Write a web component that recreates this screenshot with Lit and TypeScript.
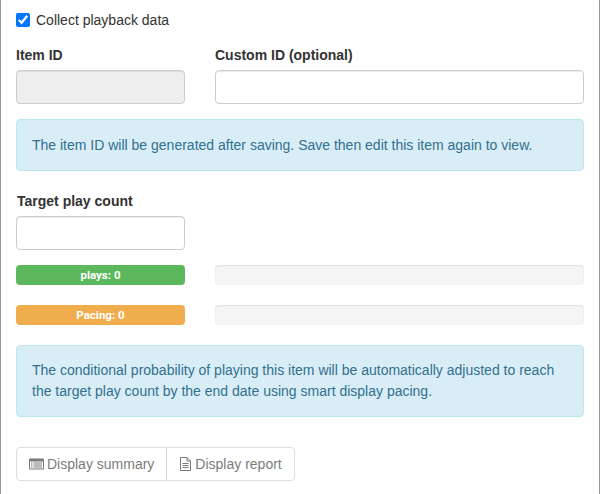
import { LitElement, html, css } from "lit";
import { customElement } from "lit/decorators.js";

@customElement("app-root")
export class AppRoot extends LitElement {
  static styles = css`
    :host {
      display: block;
      width: 600px;
      height: 494px;
      box-sizing: border-box;
      border-left: 1px solid #999;
      border-right: 1px solid #999;
      padding: 0 15px;
      background: #fff;
      color: #333;
      font-family: "Liberation Sans", Arial, sans-serif;
      font-size: 14px;
      line-height: 20px;
      overflow: hidden;
    }
    .check {
      display: flex;
      align-items: center;
      height: 20px;
      margin-top: 10px;
      gap: 6px;
    }
    .check input {
      width: 14px;
      height: 14px;
      margin: 0;
      accent-color: #0075ff;
    }
    .cols {
      display: grid;
      grid-template-columns: 169px 369px;
      column-gap: 30px;
    }
    .first {
      margin-top: 15px;
    }
    label {
      display: block;
      font-weight: bold;
      height: 20px;
      margin-bottom: 5px;
    }
    .inp {
      display: block;
      box-sizing: border-box;
      width: 100%;
      height: 34px;
      border: 1px solid #ccc;
      border-radius: 4px;
      background: #fff;
      box-shadow: inset 0 1px 1px rgba(0, 0, 0, 0.075);
      padding: 6px 12px;
      margin: 0;
    }
    .inp[disabled] {
      background: #eee;
    }
    .alert {
      box-sizing: border-box;
      background: #d9edf7;
      border: 1px solid #bce8f1;
      border-radius: 4px;
      color: #31708f;
      padding: 15px;
      width: 568px;
    }
    .a1 {
      margin-top: 15px;
    }
    .a2 {
      margin-top: 20px;
      line-height: 21px;
      padding: 14px 15px;
    }
    .target {
      margin-top: 20px;
      width: 169px;
    }
    .target label {
      padding-left: 1px;
    }
    .bar {
      height: 20px;
      border-radius: 4px;
      background: #f5f5f5;
      box-shadow: inset 0 1px 2px rgba(0, 0, 0, 0.1);
    }
    .fill {
      color: #fff;
      font-family: Roboto, "Liberation Sans", sans-serif;
      font-size: 11.5px;
      font-weight: bold;
      line-height: 20px;
      text-align: center;
      box-shadow: none;
    }
    .green {
      background: #5cb85c;
    }
    .orange {
      background: #f0ad4e;
    }
    .bars {
      margin-top: 15px;
      row-gap: 20px;
    }
    .btns {
      display: inline-flex;
      margin-top: 30px;
    }
    .btn {
      display: flex;
      align-items: center;
      box-sizing: border-box;
      height: 34px;
      padding: 6px 12px;
      background: #fff;
      border: 1px solid #ccc;
      color: #333;
      opacity: 0.65;
      gap: 3px;
      white-space: nowrap;
    }
    .btn:first-child {
      border-radius: 4px 0 0 4px;
    }
    .btn:last-child {
      border-radius: 0 4px 4px 0;
      margin-left: -1px;
      gap: 2px;
      padding-right: 12px;
    }
    svg {
      display: block;
      height: 14px;
    }
    .i1 {
      width: 15px;
    }
    .i2 {
      width: 14px;
    }
  `;

  render() {
    return html`
      <div class="check">
        <input type="checkbox" checked />
        <span>Collect playback data</span>
      </div>
      <div class="cols first">
        <div>
          <label>Item ID</label>
          <input class="inp" disabled />
        </div>
        <div>
          <label>Custom ID (optional)</label>
          <input class="inp" />
        </div>
      </div>
      <div class="alert a1">The item ID will be generated after saving. Save then edit this item again to view.</div>
      <div class="target">
        <label>Target play count</label>
        <input class="inp" />
      </div>
      <div class="cols bars">
        <div class="bar fill green">plays: 0</div>
        <div class="bar"></div>
        <div class="bar fill orange">Pacing: 0</div>
        <div class="bar"></div>
      </div>
      <div class="alert a2">
        The conditional probability of playing this item will be automatically adjusted to reach the target play count
        by the end date using smart display pacing.
      </div>
      <div class="btns">
        <div class="btn">
          <svg class="i1" viewBox="0 0 15 14">
            <path
              fill="#333"
              fill-rule="evenodd"
              d="M1 1.500h13a1 1 0 0 1 1 1v9a1 1 0 0 1-1 1H1a1 1 0 0 1-1-1v-9a1 1 0 0 1 1-1zM1 4.500v7h13v-7zM2 5.500h1.500v1H2zM4.500 5.500H13v1H4.500zM2 7.500h1.500v1H2zM4.500 7.500H13v1H4.500zM2 9.500h1.500v1H2zM4.500 9.500H13v1H4.500z"
            />
          </svg>
          Display summary
        </div>
        <div class="btn">
          <svg class="i2" viewBox="0 0 14 14">
            <path
              fill="none"
              stroke="#333"
              d="M1.500.5h6.500l3.500 3.500v9.500h-10zM8 .5v3.500h3.500M3.500 6.500h6M3.500 8.500h6M3.500 10.500h6"
            />
          </svg>
          Display report
        </div>
      </div>
    `;
  }
}
